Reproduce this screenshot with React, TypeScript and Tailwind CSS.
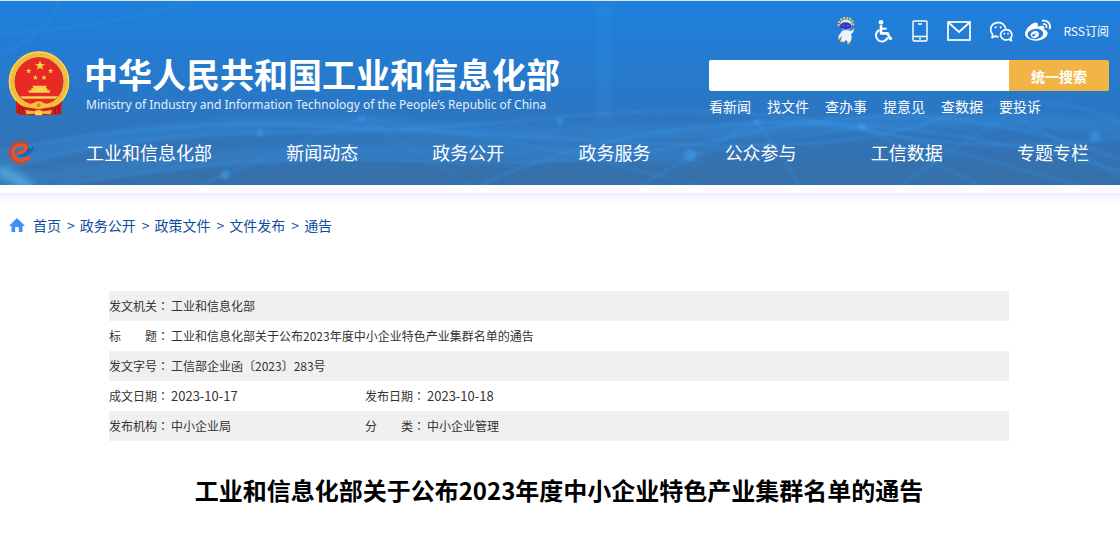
import type { ReactNode } from 'react';
import { FaWeibo } from 'react-icons/fa';

const NAV_ITEMS = ['工业和信息化部', '新闻动态', '政务公开', '政务服务', '公众参与', '工信数据', '专题专栏'];
const QUICK_LINKS = ['看新闻', '找文件', '查办事', '提意见', '查数据', '要投诉'];
const CRUMBS = ['首页', '政务公开', '政策文件', '文件发布', '通告'];

const META_ROWS: { label: string; value: string; numeric?: boolean }[][] = [
  [{ label: '发文机关', value: '工业和信息化部' }],
  [{ label: '标　　题', value: '工业和信息化部关于公布2023年度中小企业特色产业集群名单的通告' }],
  [{ label: '发文字号', value: '工信部企业函〔2023〕283号' }],
  [
    { label: '成文日期', value: '2023-10-17', numeric: true },
    { label: '发布日期', value: '2023-10-18', numeric: true },
  ],
  [
    { label: '发布机构', value: '中小企业局' },
    { label: '分　　类', value: '中小企业管理' },
  ],
];

const GEAR_TEETH = [35, 60, 85, 110, 135, 160, 185, 210, 235, 260, 285, 310];
const RAYS = [180, 205, 230, 255, 280, 305, 330, 355];

function Star({ x, y, r }: { x: number; y: number; r: number }) {
  return (
    <path
      transform={`translate(${x} ${y}) scale(${r})`}
      d="M0-1 .24-.32.95-.31.38.12.59.81 0 .4-.59.81-.38.12-.95-.31-.24-.32Z"
      fill="#f7d04a"
    />
  );
}

function Emblem() {
  return (
    <svg viewBox="26 15 186 195" className="h-[65px] w-[62px] shrink-0" aria-hidden="true">
      <circle cx="119" cy="107" r="82" fill="none" stroke="#f5bf3a" strokeWidth="18" />
      <circle cx="119" cy="107" r="89" fill="none" stroke="#ffd866" strokeWidth="3" />
      <circle cx="119" cy="107" r="80" fill="none" stroke="#e3a832" strokeWidth="3" strokeDasharray="6 8" />
      <circle cx="119" cy="107" r="73" fill="#e92a24" />
      <path d="M50 164 Q62 180 82 184 L118 190 L154 184 Q176 180 188 164 L186 203 Q178 208 166 206 L118 208 L72 207 Q58 208 50 200Z" fill="#cf1f1d" />
      <path d="M62 178 L58 203 M176 178 L180 203 M72 184 L68 205 M166 184 L170 205" stroke="#8f1414" strokeWidth="3" />
      <Star x={122} y={59} r={16} />
      <Star x={88} y={75} r={9} />
      <Star x={154} y={75} r={9} />
      <Star x={108} y={95} r={9} />
      <Star x={134} y={95} r={9} />
      <path d="M99 119 H143 L139 127 H144 V133 H152 V140 H88 V133 H96 V127 H103Z" fill="#f9cf4b" />
      <path d="M64 151 H176 L170 158 H70Z" fill="#f9cf4b" />
      <path d="M76 166 Q92 178 104 170 Q118 162 132 170 Q144 178 162 166 Q152 187 118 187 Q86 187 76 166Z" fill="#f6c440" />
      <circle cx="118" cy="178" r="6" fill="#d98a26" />
      <path d="M78 192 L104 196 Q118 186 132 196 L158 192 L154 205 Q118 200 82 205Z" fill="#f4bd38" />
      <path d="M106 199 Q118 193 130 199 L128 208 H108Z" fill="#ffd34e" />
    </svg>
  );
}

function GearLogo() {
  return (
    <svg viewBox="20 14 85 80" className="-ml-px h-[27px] w-7 shrink-0" aria-hidden="true">
      {GEAR_TEETH.map((a) => (
        <rect key={a} x="88" y="50" width="9" height="8" fill="#e5391d" transform={`rotate(${a} 60 54)`} />
      ))}
      <path d="M56 62 Q76 58 84 38 Q92 46 102 34 Q101 52 84 61 Q70 70 56 66Z" fill="#1565b8" />
      <path
        d="M84 70 Q69 82 52 76 Q35 66 39 48 Q45 31 63 31 Q80 31 77 42 Q73 54 54 56"
        fill="none"
        stroke="#fb4d17"
        strokeWidth="10"
        strokeLinecap="round"
      />
    </svg>
  );
}

function Mascot() {
  return (
    <svg viewBox="56 36 54 84" className="h-7 w-[18px]" aria-hidden="true">
      {RAYS.map((a) => (
        <rect key={a} x="102" y="57" width="6" height="6" fill="#f2cf35" transform={`rotate(${a} 83 60)`} />
      ))}
      <ellipse cx="83" cy="60" rx="18" ry="17" fill="#dce8fb" />
      <ellipse cx="82" cy="63" rx="18" ry="11" fill="#3438b4" />
      <path d="M72 62h6M86 62h6" stroke="#5f80ea" strokeWidth="3" />
      <path d="M71 78 Q83 73 97 78 L107 72 L105 82 L98 88 Q103 100 96 110 L90 116 L84 104 L76 112 L66 108 L71 94 L61 102 L60 94Z" fill="#eef3ff" />
      <path d="M60 99h5v5h-5zM103 70h5v5h-5zM64 107h8v5h-8zM86 112h9v6h-9z" fill="#f0a62d" />
    </svg>
  );
}

function WheelchairIcon() {
  return (
    <svg viewBox="130 22 57 69" className="h-[23px] w-[19px]" fill="none" stroke="currentColor" aria-hidden="true">
      <circle cx="151" cy="29" r="7" fill="currentColor" stroke="none" />
      <path d="M151 38V62H171L178 78L184 76" strokeWidth="8" strokeLinejoin="round" />
      <path d="M153 48H168" strokeWidth="6" />
      <path d="M146 52A18 18 0 1 0 171 74" strokeWidth="6" />
    </svg>
  );
}

function PhoneIcon() {
  return (
    <svg viewBox="0 0 16 22" className="h-[22px] w-4" fill="none" stroke="currentColor" aria-hidden="true">
      <rect x="1" y="1" width="14" height="20" rx="1" strokeWidth="1.4" />
      <path d="M1 16.5h14M6 4h4" strokeWidth="1.3" />
      <circle cx="8" cy="18.8" r="1" fill="currentColor" stroke="none" />
    </svg>
  );
}

function MailIcon() {
  return (
    <svg viewBox="0 0 24 20" className="h-5 w-6" fill="none" stroke="currentColor" strokeWidth="1.7" aria-hidden="true">
      <rect x="1" y="1" width="22" height="18" />
      <path d="M1.5 1.5 12 11 22.5 1.5" />
    </svg>
  );
}

function WechatIcon() {
  return (
    <svg viewBox="474 27 69 63" className="h-[21px] w-[23px]" fill="none" stroke="currentColor" strokeWidth="5" strokeLinejoin="round" aria-hidden="true">
      <path d="M500 74 Q495 75 490 72 L480 77 L482 67 Q476 61 476 53 Q477 33 498 31 Q517 32 521 50" />
      <path d="M522 53 A17 15.500 0 1 0 531 82 L538 86 L536 78 A17 15.500 0 0 0 522 53Z" />
      <g fill="currentColor" stroke="none">
        <circle cx="491" cy="46" r="3.200" />
        <circle cx="506" cy="46" r="3.200" />
        <circle cx="517" cy="65" r="2.600" />
        <circle cx="528" cy="65" r="2.600" />
      </g>
    </svg>
  );
}

function IconLink({ label, children }: { label: string; children: ReactNode }) {
  return (
    <a href="#" aria-label={label} className="flex items-center">
      {children}
    </a>
  );
}

// network pattern behind the header
function HeaderPattern() {
  return (
    <svg
      viewBox="0 0 1120 184"
      preserveAspectRatio="none"
      className="absolute inset-0 h-full w-full"
      fill="none"
      stroke="#3c9cf0"
      aria-hidden="true"
    >
      <defs>
        <filter id="soft" x="-20%" y="-20%" width="140%" height="140%">
          <feGaussianBlur stdDeviation="1.5" />
        </filter>
        <filter id="glow" filterUnits="userSpaceOnUse" x="-40" y="-40" width="1200" height="264">
          <feGaussianBlur stdDeviation="5" />
        </filter>
      </defs>
      <g filter="url(#glow)" strokeOpacity="0.3" strokeWidth="12">
        <path d="M0 160 Q200 112 400 126 T800 126 T1120 128" />
        <path d="M0 184 Q200 150 400 150 T700 156" />
        <path d="M604 0V118" strokeOpacity="0.2" />
      </g>
      <g filter="url(#soft)" strokeOpacity="0.4" strokeWidth="2">
        <path d="M0 168 Q130 132 260 132 T560 116 T860 128 T1120 136" />
        <path d="M0 150 Q160 118 300 124 T640 142 T940 118 T1120 122" />
        <path d="M60 184 Q260 150 420 160 T760 130 T1120 158" />
        <path d="M200 184 L362 116 L470 184 M362 116 L560 150 L700 184" strokeOpacity="0.25" />
        <path d="M480 184 Q600 128 760 122 T1120 170" />
        <path d="M640 184 L757 120 L800 184 M757 120 L862 126 L980 184" strokeOpacity="0.3" />
        <path d="M690 154 L862 126 L1080 184 M900 184 L1010 112 L1120 176" strokeOpacity="0.3" />
        <path d="M0 34 Q120 24 190 0 M0 52 Q40 40 60 0" strokeOpacity="0.25" />
      </g>
      <path d="M-4 170 Q20 174 32 192" stroke="#62c8f7" strokeWidth="8" strokeOpacity="0.8" filter="url(#glow)" />
      <g fill="#3fa0f5" stroke="none" filter="url(#soft)" opacity="0.5">
        <circle cx="260" cy="132" r="4" />
        <circle cx="225" cy="174" r="5" />
        <circle cx="362" cy="118" r="3" />
        <circle cx="560" cy="120" r="3" />
        <circle cx="690" cy="154" r="6" />
        <circle cx="757" cy="121" r="3" />
        <circle cx="862" cy="126" r="4" />
        <circle cx="1095" cy="136" r="5" />
      </g>
    </svg>
  );
}

function Header() {
  return (
    <header className="relative overflow-hidden border-t border-[#dfe6ec] bg-linear-to-b from-[#1d80dd] via-[#2878c8] to-[#376fa7] text-white">
      <HeaderPattern />
      <div className="relative pr-[11px] pl-2">
        <div className="flex justify-between">
          <div className="flex items-start pt-[50px]">
            <Emblem />
            <div className="pl-[14px]">
              <h1 className="text-[34px] leading-[46px] font-bold">中华人民共和国工业和信息化部</h1>
              <p className="pl-[2px] font-['Noto_Sans',sans-serif] text-xs leading-4 text-[#e2effc]">
                Ministry of Industry and Information Technology of the People’s Republic of China
              </p>
            </div>
          </div>

          <div className="w-[400px] pt-4">
            <div className="flex h-7 items-center justify-end gap-[19px]">
              <IconLink label="智能问答"><Mascot /></IconLink>
              <IconLink label="无障碍"><WheelchairIcon /></IconLink>
              <IconLink label="移动版"><PhoneIcon /></IconLink>
              <IconLink label="邮箱"><MailIcon /></IconLink>
              <div className="flex items-center gap-3">
                <IconLink label="微信"><WechatIcon /></IconLink>
                <IconLink label="微博"><FaWeibo size={26} /></IconLink>
                <a href="#" className="text-xs">RSS订阅</a>
              </div>
            </div>
            <form className="mt-[15px] flex h-[31px]">
              <input
                type="text"
                aria-label="搜索"
                className="min-w-0 flex-1 rounded-l-xs bg-white px-2 text-sm text-black outline-none"
              />
              <button type="button" className="w-[100px] rounded-r-xs bg-[#f2b545] text-sm font-bold">
                统一搜索
              </button>
            </form>
            <div className="mt-[5px] flex gap-4 text-sm leading-5">
              {QUICK_LINKS.map((item) => (
                <a key={item} href="#">{item}</a>
              ))}
            </div>
          </div>
        </div>

        <nav className="mt-[18px] flex h-[51px] items-start">
          <div className="flex h-9 w-[78px] items-center">
            <GearLogo />
          </div>
          <ul className="flex flex-1 justify-between pr-[20px] text-lg leading-9">
            {NAV_ITEMS.map((item) => (
              <li key={item}>
                <a href="#">{item}</a>
              </li>
            ))}
          </ul>
        </nav>
      </div>
    </header>
  );
}

function Breadcrumb() {
  return (
    <nav className="mt-2 flex h-16 items-center gap-2 bg-linear-to-b from-[#eaf0f8] to-white to-15% pl-[9px] text-sm text-[#0f4c9c]">
      <svg viewBox="0 0 16 14" className="h-[14px] w-4" fill="#3f8ff7" aria-hidden="true">
        <path d="M8 0 16 8H13.5V14H9.8V9H6.2V14H2.5V8H0Z" />
      </svg>
      <ol className="flex gap-[6px]">
        {CRUMBS.map((crumb, i) => (
          <li key={crumb} className="flex gap-[5px]">
            {i > 0 && <span>&gt;</span>}
            <a href="#">{crumb}</a>
          </li>
        ))}
      </ol>
    </nav>
  );
}

function MetaTable() {
  return (
    <table className="w-full table-fixed text-left text-xs text-[#333]">
      <colgroup>
        <col className="w-[62px]" />
        <col className="w-[194px]" />
        <col className="w-[62px]" />
        <col />
      </colgroup>
      <tbody>
        {META_ROWS.map((row) => (
          <tr key={row[0].label} className="h-[30px] odd:bg-[#f0f0f0]">
            {row.map((cell) => [
              <th key={cell.label} scope="row" className="font-normal whitespace-nowrap">
                {cell.label}
                <span className="font-['Noto_Sans_CJK_TC',sans-serif]">：</span>
              </th>,
              <td
                key={cell.value}
                colSpan={row.length === 1 ? 3 : 1}
                className={cell.numeric ? 'text-[13px]' : undefined}
              >
                {cell.value}
              </td>,
            ])}
          </tr>
        ))}
      </tbody>
    </table>
  );
}

export default function App() {
  return (
    <div className="min-h-screen bg-white font-['Noto_Sans_CJK_SC',sans-serif]">
      <Header />
      <Breadcrumb />
      <main className="pt-[34px] pr-[10px] pl-2">
        <div className="mx-auto max-w-[900px]">
          <MetaTable />
          <h2 className="pt-[31px] pb-6 text-center text-2xl leading-9 font-bold text-black">
            工业和信息化部关于公布2023年度中小企业特色产业集群名单的通告
          </h2>
        </div>
      </main>
    </div>
  );
}
